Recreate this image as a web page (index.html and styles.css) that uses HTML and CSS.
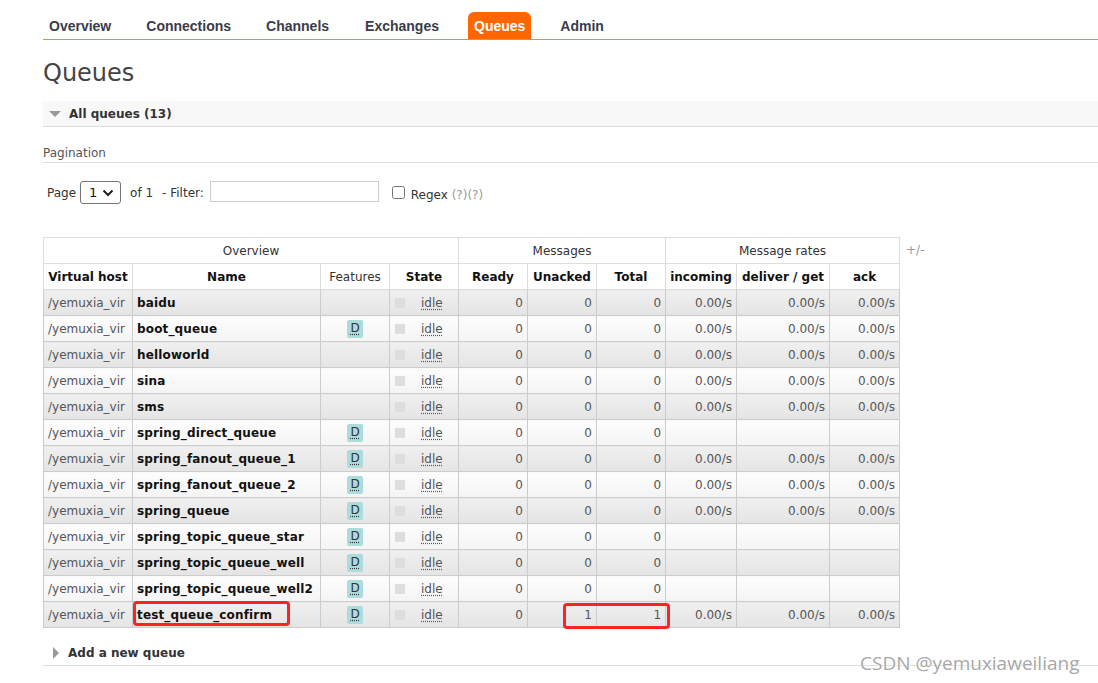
FILE: index.html
```html
<!DOCTYPE html>
<html lang="en">
<head>
<meta charset="utf-8">
<title>RabbitMQ Management - Queues</title>
<link rel="stylesheet" href="styles.css">
</head>
<body>
<div class="page">
  <ul class="nav">
    <li><a>Overview</a></li>
    <li><a>Connections</a></li>
    <li><a>Channels</a></li>
    <li><a>Exchanges</a></li>
    <li class="active"><a>Queues</a></li>
    <li><a>Admin</a></li>
  </ul>

  <h1 class="title">Queues</h1>

  <div class="section-head">
    <span class="tri-down"></span>
    <span>All queues (13)</span>
  </div>

  <h3 class="sub-head">Pagination</h3>

  <div class="filter-row">
    <span>Page</span>
    <span class="fake-select"><span>1</span>
      <svg width="12" height="8" viewBox="0 0 12 8"><path d="M1.5 1.5 L6 6 L10.5 1.5" fill="none" stroke="#222" stroke-width="2"/></svg>
    </span>
    <span class="of">of 1</span>
    <span class="dash">- Filter:</span>
    <span class="fake-input"></span>
    <input type="checkbox" class="chk">
    <span class="regex">Regex <span class="help">(?)(?)</span></span>
  </div>

  <div class="table-wrap">
    <div class="table-box">
      <table class="list">
        <colgroup>
          <col style="width:89px"><col style="width:188px"><col style="width:69px"><col style="width:69px">
          <col style="width:69px"><col style="width:69px"><col style="width:69px">
          <col style="width:71px"><col style="width:93px"><col style="width:70px">
        </colgroup>
        <thead>
          <tr class="group">
            <th colspan="4">Overview</th>
            <th colspan="3">Messages</th>
            <th colspan="3">Message rates</th>
          </tr>
          <tr class="cols">
            <th>Virtual host</th><th>Name</th><th class="light">Features</th><th>State</th>
            <th>Ready</th><th>Unacked</th><th>Total</th>
            <th>incoming</th><th>deliver / get</th><th>ack</th>
          </tr>
        </thead>
        <tbody>
          <tr class="alt1"><td class="vh">/yemuxia_vir</td><td class="nm">baidu</td><td></td><td class="st"><span class="sq"></span><span class="idle">idle</span></td><td class="n">0</td><td class="n">0</td><td class="n">0</td><td class="n">0.00/s</td><td class="n">0.00/s</td><td class="n">0.00/s</td></tr>
          <tr class="alt2"><td class="vh">/yemuxia_vir</td><td class="nm">boot_queue</td><td class="ft"><span class="badge">D</span></td><td class="st"><span class="sq"></span><span class="idle">idle</span></td><td class="n">0</td><td class="n">0</td><td class="n">0</td><td class="n">0.00/s</td><td class="n">0.00/s</td><td class="n">0.00/s</td></tr>
          <tr class="alt1"><td class="vh">/yemuxia_vir</td><td class="nm">helloworld</td><td></td><td class="st"><span class="sq"></span><span class="idle">idle</span></td><td class="n">0</td><td class="n">0</td><td class="n">0</td><td class="n">0.00/s</td><td class="n">0.00/s</td><td class="n">0.00/s</td></tr>
          <tr class="alt2"><td class="vh">/yemuxia_vir</td><td class="nm">sina</td><td></td><td class="st"><span class="sq"></span><span class="idle">idle</span></td><td class="n">0</td><td class="n">0</td><td class="n">0</td><td class="n">0.00/s</td><td class="n">0.00/s</td><td class="n">0.00/s</td></tr>
          <tr class="alt1"><td class="vh">/yemuxia_vir</td><td class="nm">sms</td><td></td><td class="st"><span class="sq"></span><span class="idle">idle</span></td><td class="n">0</td><td class="n">0</td><td class="n">0</td><td class="n">0.00/s</td><td class="n">0.00/s</td><td class="n">0.00/s</td></tr>
          <tr class="alt2"><td class="vh">/yemuxia_vir</td><td class="nm">spring_direct_queue</td><td class="ft"><span class="badge">D</span></td><td class="st"><span class="sq"></span><span class="idle">idle</span></td><td class="n">0</td><td class="n">0</td><td class="n">0</td><td></td><td></td><td></td></tr>
          <tr class="alt1"><td class="vh">/yemuxia_vir</td><td class="nm">spring_fanout_queue_1</td><td class="ft"><span class="badge">D</span></td><td class="st"><span class="sq"></span><span class="idle">idle</span></td><td class="n">0</td><td class="n">0</td><td class="n">0</td><td class="n">0.00/s</td><td class="n">0.00/s</td><td class="n">0.00/s</td></tr>
          <tr class="alt2"><td class="vh">/yemuxia_vir</td><td class="nm">spring_fanout_queue_2</td><td class="ft"><span class="badge">D</span></td><td class="st"><span class="sq"></span><span class="idle">idle</span></td><td class="n">0</td><td class="n">0</td><td class="n">0</td><td class="n">0.00/s</td><td class="n">0.00/s</td><td class="n">0.00/s</td></tr>
          <tr class="alt1"><td class="vh">/yemuxia_vir</td><td class="nm">spring_queue</td><td class="ft"><span class="badge">D</span></td><td class="st"><span class="sq"></span><span class="idle">idle</span></td><td class="n">0</td><td class="n">0</td><td class="n">0</td><td class="n">0.00/s</td><td class="n">0.00/s</td><td class="n">0.00/s</td></tr>
          <tr class="alt2"><td class="vh">/yemuxia_vir</td><td class="nm">spring_topic_queue_star</td><td class="ft"><span class="badge">D</span></td><td class="st"><span class="sq"></span><span class="idle">idle</span></td><td class="n">0</td><td class="n">0</td><td class="n">0</td><td></td><td></td><td></td></tr>
          <tr class="alt1"><td class="vh">/yemuxia_vir</td><td class="nm">spring_topic_queue_well</td><td class="ft"><span class="badge">D</span></td><td class="st"><span class="sq"></span><span class="idle">idle</span></td><td class="n">0</td><td class="n">0</td><td class="n">0</td><td></td><td></td><td></td></tr>
          <tr class="alt2"><td class="vh">/yemuxia_vir</td><td class="nm">spring_topic_queue_well2</td><td class="ft"><span class="badge">D</span></td><td class="st"><span class="sq"></span><span class="idle">idle</span></td><td class="n">0</td><td class="n">0</td><td class="n">0</td><td></td><td></td><td></td></tr>
          <tr class="alt1"><td class="vh">/yemuxia_vir</td><td class="nm">test_queue_confirm</td><td class="ft"><span class="badge">D</span></td><td class="st"><span class="sq"></span><span class="idle">idle</span></td><td class="n">0</td><td class="n">1</td><td class="n">1</td><td class="n">0.00/s</td><td class="n">0.00/s</td><td class="n">0.00/s</td></tr>
        </tbody>
      </table>
      <div class="mark mark-name"></div>
      <div class="mark mark-num"></div>
    </div>
    <span class="plusminus">+/-</span>
  </div>

  <div class="section-foot">
    <span class="tri-right"></span>
    <span>Add a new queue</span>
  </div>
</div>
<div class="watermark">CSDN @yemuxiaweiliang</div>
</body>
</html>
```

FILE: styles.css
```css
html, body {
  margin: 0;
  padding: 0;
  background: #fff;
}
body {
  font-family: "DejaVu Sans", Verdana, sans-serif;
  font-size: 12px;
  color: #484848;
  position: relative;
  min-height: 683px;
}
.page {
  padding-left: 43px;
}

/* nav */
.nav {
  list-style: none;
  margin: 0;
  padding: 12px 0 0 0;
  display: flex;
  height: 27px;
  border-bottom: 1px solid #ff8c1a;
}
.nav li {
  margin-right: 23px;
}
.nav li:nth-child(3) {
  margin-right: 24px;
}
.nav a {
  display: block;
  padding: 1px 6px 0 6px;
  height: 26px;
  line-height: 27px;
  font-family: "Liberation Sans", Arial, sans-serif;
  font-weight: bold;
  font-size: 14px;
  color: #3a3c4a;
  border-radius: 6px 6px 0 0;
}
.nav li.active a {
  background: #ff6600;
  color: #fff;
}

.title {
  margin: 18px 0 0 0;
  font-size: 24px;
  line-height: 30px;
  font-weight: normal;
  color: #444;
}

.section-head {
  margin-top: 13px;
  height: 25px;
  background: #f8f8f8;
  border-bottom: 1px solid #ddd;
  display: flex;
  align-items: center;
  font-weight: bold;
  font-size: 12px;
  color: #333;
}
.tri-down {
  width: 0;
  height: 0;
  border-left: 6px solid transparent;
  border-right: 6px solid transparent;
  border-top: 6px solid #999;
  margin: 1px 8px 0 6px;
}

.sub-head {
  margin: 19px 0 0 0;
  font-size: 12px;
  line-height: 15px;
  font-weight: normal;
  color: #555;
  padding-bottom: 1px;
  border-bottom: 1px solid #ddd;
}

.filter-row {
  margin-top: 18px;
  display: flex;
  align-items: center;
  height: 23px;
  padding-left: 4px;
  color: #333;
}
.fake-select {
  margin-left: 4px;
  border: 1px solid #767676;
  border-radius: 3px;
  display: flex;
  align-items: center;
  justify-content: space-between;
  padding: 0 6px 0 8px;
  box-sizing: border-box;
  width: 41px;
  height: 23px;
  font-size: 13px;
  color: #111;
}
.of {
  margin-left: 9px;
}
.dash {
  margin-left: 9px;
}
.fake-input {
  margin-left: 6px;
  width: 169px;
  height: 21px;
  border: 1px solid #ccc;
  box-sizing: border-box;
  margin-top: -2px;
}
.chk {
  margin: 0 0 0 13px;
  width: 13px;
  height: 13px;
}
.regex {
  margin-left: 6px;
  margin-top: 4px;
}
.help {
  color: #999;
}

/* table */
.table-wrap {
  margin-top: 33px;
  display: flex;
  align-items: flex-start;
}
.table-box {
  position: relative;
}
.list {
  border-collapse: collapse;
  table-layout: fixed;
  width: 856px;
  font-size: 12px;
}
.list th, .list td {
  height: 26px;
  padding: 0 4px;
  white-space: nowrap;
  overflow: hidden;
  box-sizing: border-box;
}
.list th {
  border: 1px solid #ddd;
  background: #fff;
  color: #111;
}
.list tr.group th {
  font-weight: normal;
  color: #333;
}
.list tr.cols th {
  font-weight: bold;
}
.list tr.cols th.light {
  font-weight: normal;
  color: #333;
}
.list td {
  border: 1px solid #ccc;
  color: #555;
}
.list tr.alt1 td {
  background: linear-gradient(to bottom, #f0f0f0, #e4e4e4);
}
.list tr.alt2 td {
  background: linear-gradient(to bottom, #fdfdfd, #f4f4f4);
}
.list td.nm {
  font-weight: bold;
  color: #111;
  letter-spacing: 0.15px;
}
.list td.n {
  text-align: right;
}
.list td.ft {
  text-align: center;
}
.badge {
  display: inline-block;
  width: 16px;
  height: 18px;
  line-height: 17px;
  background: #acdcdc;
  border-radius: 2px;
  color: #333;
  text-align: center;
  vertical-align: middle;
}
.badge, .idle {
  text-decoration: underline dotted;
  text-underline-offset: 2px;
}
.list td.st {
  padding-left: 5px;
}
.sq {
  display: inline-block;
  width: 10px;
  height: 10px;
  background: #ddd;
  vertical-align: middle;
  margin-right: 16px;
}
.idle {
  color: #555;
  vertical-align: middle;
}

.mark {
  position: absolute;
  border: 3px solid #f22;
  border-radius: 4px;
  box-sizing: border-box;
}
.mark-name {
  left: 90px;
  top: 364px;
  width: 157px;
  height: 25px;
}
.mark-num {
  left: 520px;
  top: 366px;
  width: 107px;
  height: 26px;
}

.plusminus {
  margin: 6px 0 0 6px;
  color: #999;
}

.section-foot {
  margin-top: 13px;
  height: 24px;
  border-bottom: 1px solid #ddd;
  display: flex;
  align-items: center;
  font-weight: bold;
  color: #333;
}
.tri-right {
  width: 0;
  height: 0;
  border-top: 6px solid transparent;
  border-bottom: 6px solid transparent;
  border-left: 6px solid #999;
  margin: 0 9px 0 10px;
}

.watermark {
  position: absolute;
  left: 860px;
  top: 650px;
  font-family: "Open Sans", "DejaVu Sans", sans-serif;
  font-size: 19px;
  color: #a8a8a8;
  text-shadow: 0 0 2px #fff, 0 0 2px #fff;
}
```
